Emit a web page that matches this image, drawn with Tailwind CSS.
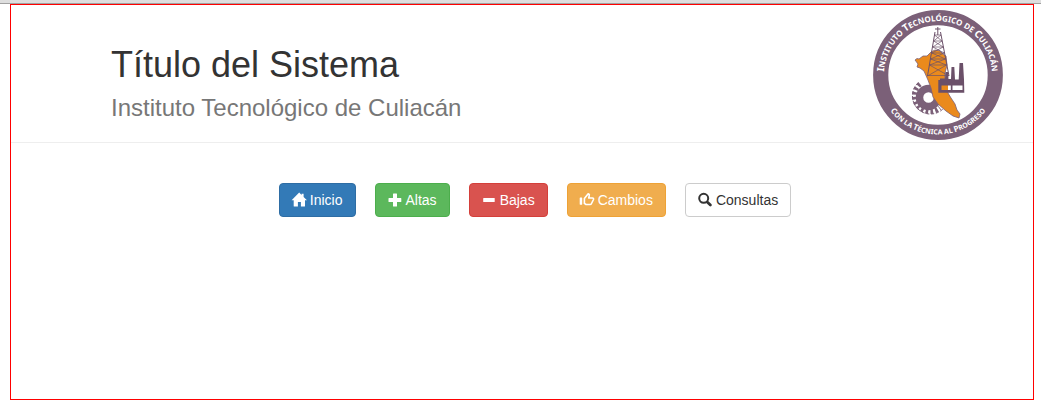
<!DOCTYPE html>
<html lang="es">
<head>
<meta charset="utf-8">
<meta name="viewport" content="width=device-width, initial-scale=1">
<title>Título del Sistema</title>
<script src="https://cdn.jsdelivr.net/npm/@tailwindcss/browser@4"></script>
</head>
<body class="flex min-h-screen flex-col bg-white pb-0.5 font-['Liberation_Sans',Arial,sans-serif] text-sm text-[#333333]">
  <div class="h-1 shrink-0 border-b border-[#a0a0a0] bg-[#dedede]"></div>
  <div class="mr-[7px] ml-2.5 flex grow flex-col border border-[#ff0000]">
    <header class="flex items-start justify-between border-b border-[#eeeeee] pt-[5px] pr-[30px] pb-0.5 pl-[100px]">
      <h1 class="pt-[35px] text-4xl leading-10">Título del Sistema
        <small class="block pt-[3px] text-2xl leading-10 text-[#777777]">Instituto Tecnológico de Culiacán</small>
      </h1>
      <svg class="size-[130px] shrink-0" viewBox="0 0 130 130" role="img" aria-label="Instituto Tecnológico de Culiacán, Con la Técnica al Progreso">
        <defs>
          <path id="top" d="M14.400 84 A54 54 0 1 1 115.600 84"/>
          <path id="bottom" d="M5.500 65 A59.500 59.500 0 0 0 124.500 65"/>
        </defs>
        <circle cx="65" cy="65" r="57.300" fill="#fff" stroke="#7b6078" stroke-width="15.200"/>
        <!-- gear -->
        <circle cx="55.500" cy="87.500" r="9" fill="#fff" stroke="#7b6078" stroke-width="7.500"/>
        <path fill="none" stroke="#7b6078" stroke-width="5" stroke-dasharray="2.600 2.200" d="M47 74 A15.500 15.500 0 0 0 67 98"/>
        <path fill="none" stroke="#7b6078" stroke-width="1" stroke-dasharray="3 1.800" d="M45 73 A18 18 0 0 0 70 99"/>
        <!-- state map -->
        <path fill="#ea8a1c" stroke="#7b6078" stroke-width=".8" stroke-linejoin="round" d="M42 50 L44 48.500 L46 49 L50 46 L54 46 L58 42 L62 40 L67 41 L70 44 L73 46 L74 55 L72 63 L72 75 L75 83 L78 88 L82 94 L84 100 L87 104 L86 108 L80 106 L73 101 L65 94 L60 87 L58 78 L55 70 L51 61 L47 58 L44 57 L45 54 Z"/>
        <!-- derrick -->
        <g fill="none" stroke="#6b5069" stroke-width=".7">
          <path stroke-width="1" d="M62 22 L54.500 66 M67.500 22 L76 66 M64.800 17 V25 M62 19 H67.500"/>
          <path d="M61.500 25 H68 M60.700 31 H69 M59.800 37 H70.200 M58.900 43 H71.300 M57.500 49 H72.400 M56.500 55 H73.500 M54.500 65.500 H76 M61.500 25 L69 31 L59.800 37 L71.300 43 L57.500 49 L73.500 55 L54.500 66 M68 25 L60.700 31 L70.200 37 L58.900 43 L72.400 49 L56.500 55 L76 66"/>
        </g>
        <!-- factory -->
        <path fill="#6b5069" d="M65.300 70 H67 V68.500 H72 L72.500 62 H75 L75.500 69 H78 L78.500 57 H81.300 L82 69.500 H85.700 L86.500 53 H90 L91 69.500 L91.300 82.700 H65.300 Z"/>
        <path fill="#ea8a1c" d="M68.500 75.500 H75 V80 H68.500 Z"/>
        <path fill="#fff" d="M75 75.500 H77.800 V80 H75 Z M79.500 75.500 H89.500 V80 H79.500 Z"/>
        <g fill="#fff" text-anchor="middle" class="font-['Noto_Sans',sans-serif] font-bold">
          <text class="text-[8px]"><textPath href="#top" startOffset="50%"><tspan class="text-[10px]">I</tspan>NSTITUTO <tspan class="text-[10px]">T</tspan>ECNOLÓGICO DE <tspan class="text-[10px]">C</tspan>ULIACÁN</textPath></text>
          <text class="text-[7px]"><textPath href="#bottom" startOffset="50%"><tspan class="text-[8px]">C</tspan>ON LA <tspan class="text-[8px]">T</tspan>ÉCNICA AL <tspan class="text-[8px]">P</tspan>ROGRESO</textPath></text>
        </g>
      </svg>
    </header>
    <nav aria-label="Menú principal" class="flex flex-wrap justify-center gap-[19px] pt-10 pl-[26px]">
      <button type="button" class="flex h-[34px] items-center gap-1 rounded border border-[#2e6da4] bg-[#337ab7] px-3 text-white">
        <svg class="size-3.5 overflow-visible" viewBox="0 0 14 14" fill="currentColor" aria-hidden="true"><path d="M7.200 -.5 L9.600 1.900 V.8 H11.600 V3.900 L15 7.300 H13 V13 Q13 13.500 12.500 13.500 H8.900 V9 H5.900 V13.500 H2.200 Q1.700 13.500 1.700 13 V7.300 H-.4 Z"/></svg>
        Inicio
      </button>
      <button type="button" class="flex h-[34px] items-center gap-1 rounded border border-[#4cae4c] bg-[#5cb85c] px-3 text-white">
        <svg class="size-3.5" viewBox="0 0 14 14" fill="currentColor" aria-hidden="true"><path d="M5.500 .5 H8.500 Q9 .5 9 1 V5 H12.800 Q13.300 5 13.300 5.500 V8.500 Q13.300 9 12.800 9 H9 V13 Q9 13.500 8.500 13.500 H5.500 Q5 13.500 5 13 V9 H1 Q.5 9 .5 8.500 V5.500 Q.5 5 1 5 H5 V1 Q5 .5 5.500 .5 Z"/></svg>
        Altas
      </button>
      <button type="button" class="flex h-[34px] items-center gap-1 rounded border border-[#d43f3a] bg-[#d9534f] px-3 text-white">
        <svg class="size-3.5" viewBox="0 0 14 14" fill="currentColor" aria-hidden="true"><rect x="1.200" y="5" width="11.500" height="4" rx=".6"/></svg>
        Bajas
      </button>
      <button type="button" class="flex h-[34px] items-center gap-1 rounded border border-[#eea236] bg-[#f0ad4e] px-3 text-white">
        <svg class="size-3.5 overflow-visible" viewBox="0 0 14 14" aria-hidden="true"><rect x="-.3" y="4.500" width="2.500" height="7.200" rx=".4" fill="currentColor"/><path fill="none" stroke="currentColor" stroke-width="1.600" stroke-linejoin="round" d="M4.400 10.400 V5.600 L7.600 1.600 Q8 .7 8.800 1 Q9.700 1.400 9.200 3 L8.700 5 H12.500 Q13.800 5.200 13.500 6.500 L11.500 10.500 Q11.100 11.500 10 11.500 H6 Z"/></svg>
        Cambios
      </button>
      <button type="button" class="flex h-[34px] items-center gap-1 rounded border border-[#cccccc] bg-white px-3">
        <svg class="size-3.5 overflow-visible" viewBox="0 0 14 14" fill="none" stroke="currentColor" aria-hidden="true"><circle cx="5.700" cy="5.300" r="4.500" stroke-width="2"/><path stroke-width="2.800" stroke-linecap="round" d="M9.500 9.200 L12.400 12.100"/></svg>
        Consultas
      </button>
    </nav>
  </div>
</body>
</html>
